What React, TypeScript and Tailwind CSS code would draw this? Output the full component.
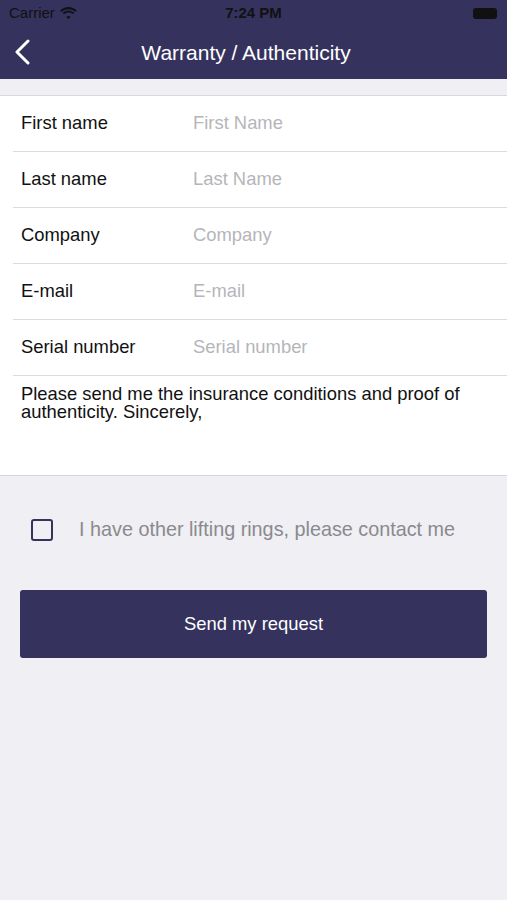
import React, { useState } from 'react';

const fields = [
  { label: 'First name', placeholder: 'First Name' },
  { label: 'Last name', placeholder: 'Last Name' },
  { label: 'Company', placeholder: 'Company' },
  { label: 'E-mail', placeholder: 'E-mail' },
  { label: 'Serial number', placeholder: 'Serial number' },
];

// status bar wifi glyph
const Wifi = () => (
  <svg width="17" height="13" viewBox="0 0 17 13" fill="#111">
    <path d="M8.5 2.2c2.6 0 5 1 6.8 2.7l1.4-1.5C14.5 1.3 11.6 0 8.5 0S2.5 1.3.3 3.4l1.4 1.5C3.5 3.2 5.9 2.2 8.5 2.2z" />
    <path d="M8.5 5.6c1.7 0 3.2.6 4.4 1.7l1.4-1.5C12.8 4.3 10.7 3.4 8.5 3.4S4.2 4.3 2.7 5.8l1.4 1.5c1.2-1.1 2.7-1.7 4.4-1.7z" />
    <path d="M8.5 9c.8 0 1.5.3 2 .8L8.5 12.2 6.5 9.8c.5-.5 1.2-.8 2-.8z" />
  </svg>
);

const App = () => {
  const [checked, setChecked] = useState(false);

  return (
    <div className="min-h-screen bg-[#efeff4] font-['Liberation_Sans',Arial,sans-serif]">
      {/* Header */}
      <div className="bg-[#35325e] h-[79px] flex flex-col">
        <div className="h-[27px] flex items-center justify-between px-[9px] text-[15px] text-[#111]">
          <div className="flex items-center gap-[5px] w-[100px]">
            <span>Carrier</span>
            <Wifi />
          </div>
          <span className="font-bold">7:24 PM</span>
          <div className="w-[100px] flex justify-end pr-[1px]">
            <div className="w-[24px] h-[11px] rounded-[3px] bg-[#111]" />
          </div>
        </div>
        <div className="flex-1 flex items-center relative">
          <button className="absolute left-[13px] top-[12px]">
            <svg width="20" height="26" viewBox="0 0 20 26" fill="none" stroke="white" strokeWidth="3" strokeLinecap="round" strokeLinejoin="round">
              <path d="M15 2L4 13l11 11" />
            </svg>
          </button>
          <div className="flex-1 text-center text-white text-[21px] pb-[1px] pr-[15px]">Warranty / Authenticity</div>
        </div>
      </div>

      {/* Form */}
      <div className="mt-[16px] bg-white border-t border-[#d9d9dd]">
        {fields.map((f, i) => (
          <div key={i} className="pl-[13px]">
            <div className="h-[56px] flex items-center border-b-[1.5px] border-[#dcdce0] pl-[8px] pb-[1px]">
              <span className="w-[172px] text-[18.4px] text-[#111]">{f.label}</span>
              <span className="text-[18.4px] text-[#b5b5ba]">{f.placeholder}</span>
            </div>
          </div>
        ))}
        <div className="h-[100px] px-[21px] pt-[9px] text-[18.4px] leading-[18px] text-[#111] border-b border-[#d6d6da]">
          Please send me the insurance conditions and proof of authenticity. Sincerely,
        </div>
      </div>

      {/* Checkbox */}
      <div className="flex items-center mt-[39px] pl-[31px]">
        <button
          onClick={() => setChecked(!checked)}
          className="w-[22px] h-[22px] border-[2.5px] border-[#35325e] rounded-[3px] bg-transparent"
        />
        <span className="ml-[26px] text-[19.8px] text-[#8a8a8e]">I have other lifting rings, please contact me</span>
      </div>

      {/* Button */}
      <div className="px-[20px] mt-[45px]">
        <button className="w-full h-[68px] bg-[#35325e] rounded-[3px] text-white text-[18.4px]">
          Send my request
        </button>
      </div>
    </div>
  );
};

export default App;
